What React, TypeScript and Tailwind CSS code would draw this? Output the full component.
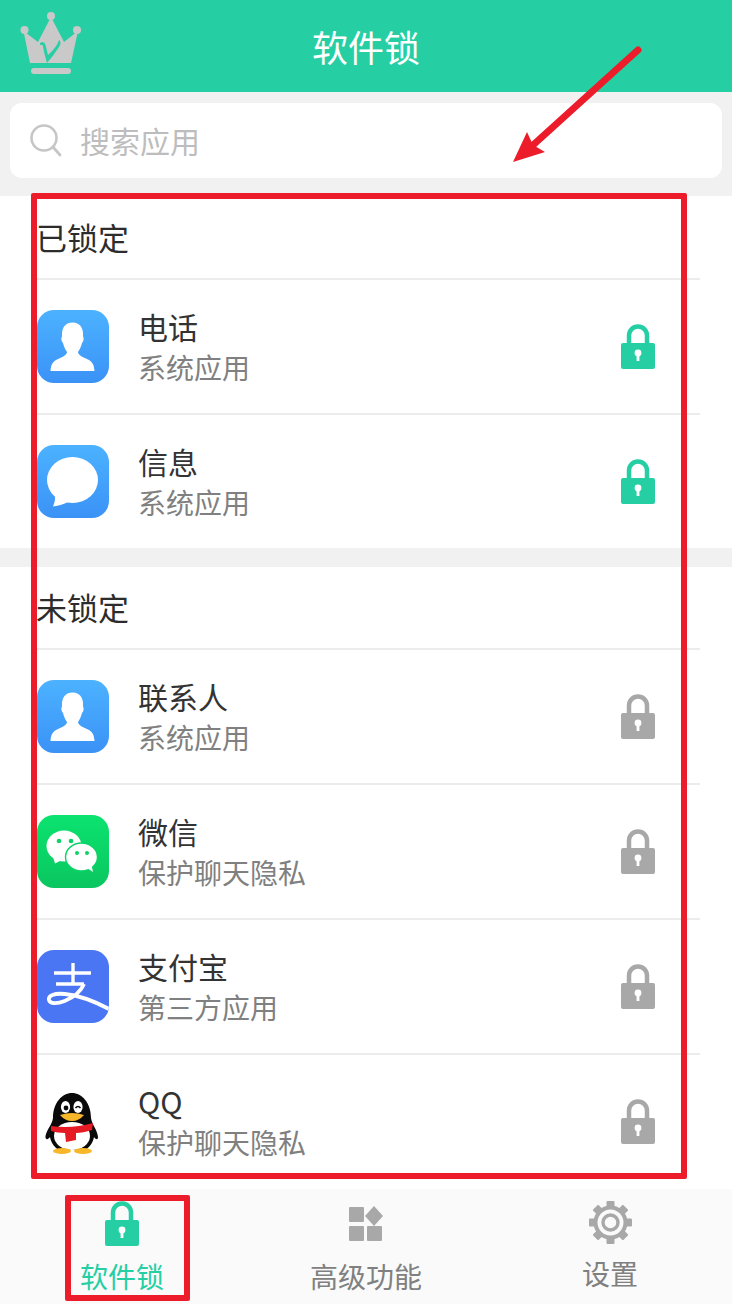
import React from 'react';

const cjk = { fontFamily: '"Noto Sans CJK SC", "Noto Sans", sans-serif' };

function LockIcon({ color }: { color: string }) {
  return (
    <svg width="34" height="45" viewBox="0 0 34 45" className="shrink-0">
      <path d="M8 20 V11.5 a9 9 0 0 1 18 0 V20" fill="none" stroke={color} strokeWidth="4.5" />
      <rect x="0" y="19" width="34" height="26" rx="2" fill={color} />
      <circle cx="17" cy="29" r="3.4" fill="#fff" />
      <rect x="15.6" y="30" width="2.8" height="7" fill="#fff" />
    </svg>
  );
}

function Crown() {
  return (
    <svg width="64" height="64" viewBox="0 0 64 64" className="shrink-0">
      <g fill="#c9c9c9">
        <circle cx="31" cy="5" r="4" />
        <circle cx="4.5" cy="19" r="4" />
        <circle cx="57" cy="19" r="4" />
        <path d="M10 52 L3.5 20 L18 31 L31 6 L44 31 L58 20 L51 52 Z" />
        <rect x="11" y="57" width="40" height="6" rx="3" />
      </g>
      <path d="M20 32 Q24 29 25.5 34 L28 44 Q37 36 39 29 Q42 31 39 36 Q34 44 27 52 Q24 42 23 35 Q22 33 20 34 Z" fill="#27cfa4" />
    </svg>
  );
}

function SearchIcon() {
  return (
    <svg width="32" height="34" viewBox="0 0 32 34" className="shrink-0">
      <circle cx="14" cy="14" r="12.5" fill="none" stroke="#c6c6c6" strokeWidth="2.6" />
      <path d="M23 23 L30 31" stroke="#c6c6c6" strokeWidth="2.8" strokeLinecap="round" />
    </svg>
  );
}

function PersonIcon() {
  return (
    <div className="w-[72px] h-[73px] rounded-[17px] bg-gradient-to-b from-[#4cb2ff] to-[#3b92f6] shrink-0 flex items-center justify-center">
      <svg width="72" height="73" viewBox="0 0 72 73">
        <path d="M35.5 12.5 C43 12.5 46.5 18 46 26 C46 27 47 27.5 46.5 30 C46 32 45.5 32.5 45 33 C44 37 42.5 40 41 42 C41.5 46 47 47.5 51 49.5 C55 51.5 57 54 57.5 61 H13.5 C14 54 16 51.5 20 49.5 C24 47.5 29.5 46 30 42 C28.5 40 27 37 26 33 C25.5 32.5 25 32 24.5 30 C24 27.5 25 27 25 26 C24.5 18 28 12.5 35.5 12.5 Z" fill="#fff" />
      </svg>
    </div>
  );
}

function MessageIcon() {
  return (
    <div className="w-[72px] h-[73px] rounded-[17px] bg-gradient-to-b from-[#4cb2ff] to-[#3b92f6] shrink-0 flex items-center justify-center">
      <svg width="72" height="73" viewBox="0 0 72 73">
        <ellipse cx="35.5" cy="35" rx="25.5" ry="23" fill="#fff" />
        <path d="M17 47 C19 52 18 57 16 61.5 C22 61 27 59 31 57 Z" fill="#fff" />
      </svg>
    </div>
  );
}

function WechatIcon() {
  return (
    <div className="w-[72px] h-[73px] rounded-[17px] bg-gradient-to-b from-[#0be36f] to-[#0ac660] shrink-0 flex items-center justify-center">
      <svg width="72" height="73" viewBox="0 0 72 73">
        <ellipse cx="27" cy="31" rx="17.5" ry="15.5" fill="#fff" />
        <path d="M16 42 L18 48.5 L25 45 Z" fill="#fff" />
        <circle cx="22" cy="26" r="2.3" fill="#0bd368" />
        <circle cx="34" cy="26" r="2.3" fill="#0bd368" />
        <ellipse cx="44.5" cy="42" rx="16" ry="14" fill="#fff" stroke="#0bd368" strokeWidth="1.4" />
        <path d="M50 53 L56 57 L54.5 50 Z" fill="#fff" />
        <circle cx="40" cy="38" r="2" fill="#0bd368" />
        <circle cx="50" cy="38" r="2" fill="#0bd368" />
      </svg>
    </div>
  );
}

function AlipayIcon() {
  return (
    <div className="w-[72px] h-[73px] rounded-[17px] bg-[#4a76f4] shrink-0 overflow-hidden">
      <svg width="72" height="73" viewBox="0 0 72 73">
        <g fill="none" stroke="#fff" strokeWidth="3.4">
          <path d="M17 23 H54" />
          <path d="M36 13 V34" />
          <path d="M47 34 C40 50 14 58 12 50 C10 41 36 40 72 59" strokeWidth="3.8" />
          <path d="M19 34 H47" />
        </g>
      </svg>
    </div>
  );
}

function QQIcon() {
  return (
    <div className="w-[72px] h-[73px] shrink-0 flex items-center justify-center">
      <svg width="72" height="73" viewBox="0 0 72 73">
        <path d="M8.5 51 C10 44 15 40 16 33 C16 18 25 8 35 8 C45 8 54 18 54 33 C55 40 60 44 61 52 C61 55 59 55 57 52 C56 58 52 63 48 65 H22 C18 63 14 58 13 52 C11 55 8 55 8.5 51 Z" fill="#0a0a0a" />
        <ellipse cx="35" cy="51" rx="18" ry="14" fill="#fff" />
        <ellipse cx="28.5" cy="22" rx="4.6" ry="6" fill="#fff" />
        <ellipse cx="41" cy="22" rx="4.6" ry="6" fill="#fff" />
        <circle cx="29" cy="23" r="2.4" fill="#0a0a0a" />
        <path d="M38.5 23 Q41 20 43.5 23" fill="none" stroke="#0a0a0a" strokeWidth="1.6" />
        <path d="M23 30 Q35 26 47 30 Q42 36 35 36 Q28 36 23 30 Z" fill="#f8b62a" />
        <path d="M14 41 Q35 44 56 38 L55 45 Q46 48 39 48 L39 55 L29 57 L28 48 Q20 48 14 46 Z" fill="#e51a24" />
        <ellipse cx="25" cy="66" rx="9" ry="3" fill="#f8b62a" />
        <ellipse cx="46" cy="66" rx="9" ry="3" fill="#f8b62a" />
      </svg>
    </div>
  );
}

function GridIcon() {
  return (
    <svg width="34" height="35" viewBox="0 0 34 35">
      <g fill="#a8a8a8">
        <rect x="0" y="1" width="15" height="15" rx="1" />
        <path d="M25 0 L34 10 L25 20 L16 10 Z" />
        <rect x="0" y="20" width="15" height="15" rx="1" />
        <rect x="18" y="20" width="15" height="15" rx="1" />
      </g>
    </svg>
  );
}

function GearIcon() {
  return (
    <svg width="43" height="43" viewBox="0 0 43 43">
      <g fill="#a8a8a8">
        {[0, 45, 90, 135, 180, 225, 270, 315].map((a) => (
          <rect key={a} x="17.5" y="0" width="8" height="8" rx="1" transform={`rotate(${a} 21.5 21.5)`} />
        ))}
      </g>
      <circle cx="21.5" cy="21.5" r="15" fill="none" stroke="#a8a8a8" strokeWidth="4" />
      <circle cx="21.5" cy="21.5" r="7.5" fill="none" stroke="#a8a8a8" strokeWidth="3.4" />
    </svg>
  );
}

type AppRow = { name: string; sub: string; icon: React.ReactNode };

const lockedApps: AppRow[] = [
  { name: '电话', sub: '系统应用', icon: <PersonIcon /> },
  { name: '信息', sub: '系统应用', icon: <MessageIcon /> },
];

const unlockedApps: AppRow[] = [
  { name: '联系人', sub: '系统应用', icon: <PersonIcon /> },
  { name: '微信', sub: '保护聊天隐私', icon: <WechatIcon /> },
  { name: '支付宝', sub: '第三方应用', icon: <AlipayIcon /> },
  { name: 'QQ', sub: '保护聊天隐私', icon: <QQIcon /> },
];

function Row({ app, lockColor }: { app: AppRow; lockColor: string }) {
  return (
    <div className="h-[135px] ml-[36px] mr-[32px] border-t-2 border-[#ececec] flex items-center pl-px pr-[45px]">
      {app.icon}
      <div className="ml-[29px] flex-1 flex flex-col">
        <div className="text-[30px] leading-[41px] text-[#333333]">{app.name}</div>
        <div className="text-[28px] leading-[40px] text-[#808080]">{app.sub}</div>
      </div>
      <LockIcon color={lockColor} />
    </div>
  );
}

function SectionTitle({ children, height }: { children: React.ReactNode; height: string }) {
  return (
    <div className={`${height} pl-[36px] flex items-center text-[31px] text-[#2c2c2c]`}>{children}</div>
  );
}

export default function App() {
  return (
    <div className="relative w-[732px] h-[1304px] overflow-hidden bg-white flex flex-col" style={cjk}>
      <header className="relative h-[92px] bg-[#26cfa3] flex items-center justify-center shrink-0">
        <div className="absolute left-[20px] top-[11px]">
          <Crown />
        </div>
        <span className="text-[36px] text-white">软件锁</span>
      </header>

      <div className="h-[104px] bg-[#f1f1f1] pt-[11px] px-[10px] shrink-0">
        <div className="h-[75px] bg-white rounded-[12px] flex items-center pl-[20px] gap-[18px]">
          <SearchIcon />
          <span className="text-[30px] text-[#bdbdbd]">搜索应用</span>
        </div>
      </div>

      <SectionTitle height="h-[82px]">已锁定</SectionTitle>
      {lockedApps.map((app) => (
        <Row key={app.name} app={app} lockColor="#26cfa3" />
      ))}

      <div className="h-[19px] bg-[#f1f1f1] shrink-0" />

      <SectionTitle height="h-[81px]">未锁定</SectionTitle>
      {unlockedApps.map((app) => (
        <Row key={app.name} app={app} lockColor="#a8a8a8" />
      ))}

      <nav className="flex-1 bg-[#fafafa] grid grid-cols-3 mt-px">
        <div className="flex flex-col items-center pt-[12px]">
          <LockIcon color="#26cfa3" />
          <span className="text-[28px] leading-[40px] mt-[10px] text-[#26cfa3]">软件锁</span>
        </div>
        <div className="flex flex-col items-center pt-[17px]">
          <GridIcon />
          <span className="text-[28px] leading-[40px] mt-[15px] text-[#808080]">高级功能</span>
        </div>
        <div className="flex flex-col items-center pt-[12px]">
          <GearIcon />
          <span className="text-[28px] leading-[40px] mt-[9px] text-[#808080]">设置</span>
        </div>
      </nav>

      {/* red annotations on top of the screenshot */}
      <div className="absolute left-[31px] top-[193px] w-[656px] h-[986px] border-[6px] border-[#ec1c2b] rounded-[2px]" />
      <div className="absolute left-[65px] top-[1195px] w-[125px] h-[106px] border-[6px] border-[#ec1c2b] rounded-[2px]" />
      <svg className="absolute left-0 top-0" width="732" height="200" viewBox="0 0 732 200">
        <path d="M638 50 L532 146" stroke="#ec1c2b" strokeWidth="7" strokeLinecap="round" />
        <path d="M513 162 L527 132 L533 145 L545 152 Z" fill="#ec1c2b" />
      </svg>
    </div>
  );
}
